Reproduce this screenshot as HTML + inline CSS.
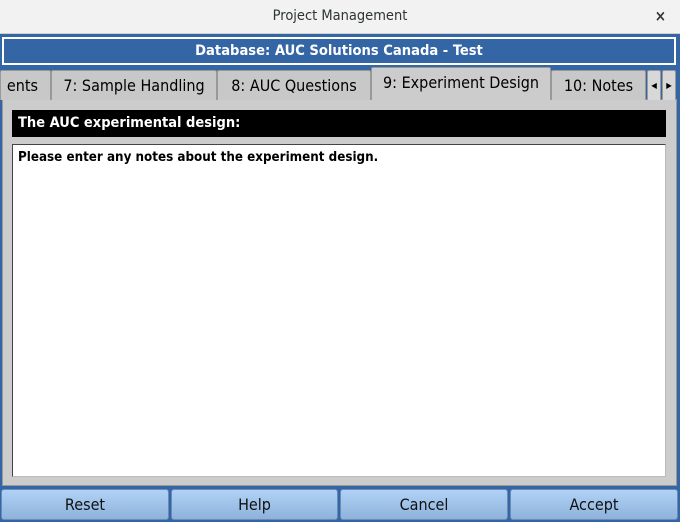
<!DOCTYPE html>
<html><head><style>
*{margin:0;padding:0;box-sizing:border-box}
body{width:680px;height:522px;overflow:hidden;background:#3465a4;font-family:"DejaVu Sans Condensed","Liberation Sans",sans-serif;font-size:14px;position:relative}
.abs{position:absolute;white-space:nowrap}
#title{left:0;top:0;width:680px;height:34px;background:#f2f2f2;border-bottom:1px solid #d0d0d0;text-align:center;line-height:32px;color:#2e3436;font-size:14.5px}
#x{right:14px;top:0;line-height:32px;font-size:15px;font-weight:bold;color:#333}
#banner{left:2px;top:37px;width:674px;height:28px;background:#3465a4;border:2px solid #fff;color:#fff;text-align:center;line-height:24px;font-size:14.6px;font-weight:bold}
.tab{top:70px;height:30px;background:#c8c8c8;border:1px solid #999;border-bottom:none;line-height:30px;text-align:center;color:#000;font-size:16px;border-radius:2px 2px 0 0;overflow:hidden}
#panel{left:2px;top:99px;width:675px;height:387px;background:#cccccc;border:1px solid #999}
#hdr{left:12px;top:110px;width:654px;height:27px;background:#000;color:#fff;font-weight:bold;line-height:27px;padding-left:6px;font-size:14.5px}
#txt{left:12px;top:144px;width:654px;height:333px;background:#fff;border:1px solid #444;border-right-color:#bbb;border-bottom-color:#bbb;padding:5px 5px;font-size:13.3px;font-weight:bold;color:#000}
.btn{top:489px;height:31px;border:1px solid #6a8ab8;border-radius:3px;background:linear-gradient(#b0d2f6,#8fb2dc);text-align:center;line-height:30px;font-size:16px;color:#111}
</style></head><body>
<div id="title" class="abs">Project Management</div>
<div id="x" class="abs">×</div>
<div id="banner" class="abs">Database: AUC Solutions Canada - Test</div>
<div id="panel" class="abs"></div>
<div class="abs tab" style="left:0;width:51px;text-align:right;padding-right:12px">ents</div>
<div class="abs tab" style="left:51px;width:166px">7: Sample Handling</div>
<div class="abs tab" style="left:217px;width:154px">8: AUC Questions</div>
<div class="abs tab" style="left:371px;top:67px;height:33px;width:180px;background:#cccccc;border-color:#999">9: Experiment Design</div>
<div class="abs tab" style="left:551px;width:95px">10: Notes</div>
<div class="abs tab" style="left:647px;width:14px;font-size:8px;line-height:30px;background:#d8d8d8">◀</div>
<div class="abs tab" style="left:662px;width:14px;font-size:8px;line-height:30px;background:#d8d8d8">▶</div>
<div id="hdr" class="abs">The AUC experimental design:</div>
<div id="txt" class="abs">Please enter any notes about the experiment design.</div>
<div class="abs btn" style="left:1px;width:168px">Reset</div>
<div class="abs btn" style="left:171px;width:167px">Help</div>
<div class="abs btn" style="left:340px;width:168px">Cancel</div>
<div class="abs btn" style="left:510px;width:168px">Accept</div>
</body></html>
